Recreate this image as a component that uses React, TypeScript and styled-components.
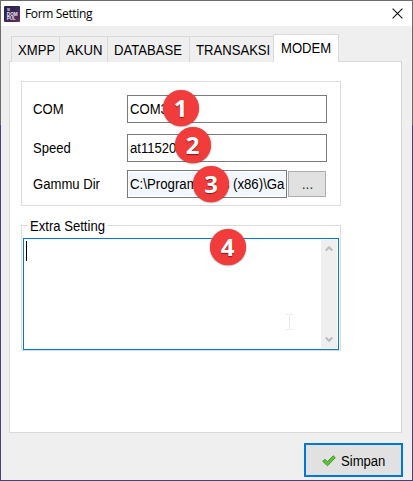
import React from "react";
import styled, { createGlobalStyle } from "styled-components";

const Global = createGlobalStyle`
  * { box-sizing: border-box; }
  body { margin: 0; overflow: hidden; font-family: "Liberation Sans", Arial, sans-serif; color: #000; }
`;

const Frame = styled.div`
  width: 413px;
  height: 481px;
  padding: 1px;
  background: linear-gradient(#6d6b6e 0 125px, #45427a 125px);
`;
const Window = styled.main`
  height: 479px;
  display: flex;
  flex-direction: column;
  background: #efefef;
`;
const TitleBar = styled.header`
  height: 25px;
  flex: none;
  display: flex;
  align-items: center;
  padding: 0 9px 0 3px;
  background: #fff;
`;
const Title = styled.h1`
  flex: 1;
  margin: 0 0 0 5px;
  font: 400 12px/24px "Open Sans", "Noto Sans", sans-serif;
  letter-spacing: -0.35px;
`;
const CloseButton = styled.button`
  width: 11px;
  height: 11px;
  padding: 0;
  border: 0;
  background: none;
  display: flex;
`;

/* Condensed label face: regular glyphs narrowed from the left edge. */
const Label = styled.span<{ $squeeze?: number }>`
  display: block;
  font-size: 15.5px;
  line-height: 18px;
  white-space: nowrap;
  transform: scaleX(${(p) => p.$squeeze ?? 0.845});
  transform-origin: left;
`;

const TabList = styled.nav`
  height: 28px;
  margin: 8px 0 -1px 10px;
  flex: none;
  display: flex;
  align-items: flex-end;
`;
const Tab = styled.button<{ $width: number; $active?: boolean }>`
  flex: none;
  width: ${(p) => p.$width}px;
  height: ${(p) => (p.$active ? 28 : 26)}px;
  padding: ${(p) => (p.$active ? "4px 0 0 7px" : "4px 0 0 5.5px")};
  border: solid #d9d9d9;
  border-width: ${(p) => (p.$active ? "1px 1px 0" : "1px 0 0 1px")};
  background: ${(p) => (p.$active ? "#fff" : "#efefef")};
  font-family: inherit;
  color: inherit;
  text-align: left;
  display: flex;
  align-items: flex-start;
  z-index: ${(p) => (p.$active ? 1 : 0)};
`;
const Panel = styled.section`
  width: 393px;
  height: 372px;
  margin-left: 8px;
  flex: none;
  padding: 19px 0 0 11px;
  border: 1px solid #d9d9d9;
  background: #fff;
`;
const Group = styled.div`
  width: 320px;
  height: 125px;
  padding: 13px 13px 0 11px;
  border: 1px solid #dcdcdc;
  display: flex;
  flex-direction: column;
`;
const Row = styled.label<{ $gap?: number }>`
  height: 28px;
  margin-bottom: ${(p) => p.$gap ?? 0}px;
  display: grid;
  grid-template-columns: 94px 1fr;
  align-items: center;
`;
const Controls = styled.div`
  display: flex;
  align-items: center;
  gap: 1px;
`;
const Field = styled.div<{ $width: number; $tinted?: boolean }>`
  flex: none;
  width: ${(p) => p.$width}px;
  height: 28px;
  padding: 4px 0 0 2px;
  border: 1px solid #7a7a7a;
  background: ${(p) => (p.$tinted ? "#f2f6fd" : "#fff")};
  box-shadow: inset 0 0 0 1px #fff;
  overflow: hidden;
`;
const BrowseButton = styled.button`
  width: 38px;
  height: 26px;
  padding: 0 0 0 1px;
  border: 1px solid #adadad;
  background: #e1e1e1;
  color: #333;
  font: 14px "Liberation Sans", sans-serif;
`;
const Fieldset = styled.fieldset`
  width: 320px;
  height: 135px;
  min-width: 0;
  margin: 10px 0 0;
  padding: 3px 1px 0;
  border: 1px solid #dcdcdc;
`;
const Legend = styled.legend`
  width: 79px;
  height: 19px;
  margin-left: 5px;
  padding: 1px 0 0 2px;
`;
const TextArea = styled.div`
  width: 316px;
  height: 112px;
  padding: 1px 1px 1px 2px;
  border: 1px solid #0078d7;
  display: flex;
  justify-content: space-between;
`;
const Caret = styled.div`
  width: 1px;
  height: 20px;
  margin-top: 1px;
  background: #000;
`;
const Scrollbar = styled.div`
  width: 16px;
  height: 108px;
  padding: 5px 4px;
  background: #efefef;
  display: flex;
  flex-direction: column;
  justify-content: space-between;
`;
const Footer = styled.footer`
  display: flex;
  justify-content: flex-end;
  padding: 10px 9px 0 0;
`;
const SaveButton = styled.button`
  width: 99px;
  height: 34px;
  padding: 1px 0 0 16px;
  border: 2px solid #0078d7;
  background: #e1e1e1;
  font-family: inherit;
  color: inherit;
  display: flex;
  align-items: center;
  gap: 5px;
`;
const Badge = styled.div<{ $x: number; $y: number }>`
  position: absolute;
  left: ${(p) => p.$x}px;
  top: ${(p) => p.$y}px;
  width: 36px;
  height: 36px;
  border-radius: 50%;
  background: #f23c3c;
  box-shadow: 0 0.5px 1.5px rgba(90, 20, 20, 0.7);
  color: #fff;
  font: 700 24px/35px "Open Sans", sans-serif;
  text-align: center;
  text-shadow: 0 1px 1px rgba(60, 0, 0, 0.6);
`;
const Pointer = styled.svg`
  position: absolute;
  left: 286px;
  top: 314px;
`;

const tabs = [
  { name: "XMPP", width: 48 },
  { name: "AKUN", width: 48 },
  { name: "DATABASE", width: 82 },
  { name: "TRANSAKSI", width: 84 },
  { name: "MODEM", width: 66, active: true },
];
const badges = [
  { x: 162.5, y: 90 },
  { x: 174.5, y: 127 },
  { x: 193, y: 165.5 },
  { x: 209.5, y: 228.5 },
];

const AppIcon = () => (
  <svg width="16" height="16" viewBox="0 0 16 16">
    <defs>
      <linearGradient id="logo" x1="0" y1="0" x2="1" y2="1">
        <stop offset="0" stopColor="#1f2150" />
        <stop offset=".5" stopColor="#392758" />
        <stop offset="1" stopColor="#68315f" />
      </linearGradient>
    </defs>
    <rect width="16" height="16" rx="1" fill="url(#logo)" />
    <g fill="#f0e8f4" fontFamily="Liberation Sans, sans-serif" fontWeight="700">
      <text x="3" y="5.2" fontSize="3">SI</text>
      <text x="2.8" y="9.7" fontSize="4.6" textLength="10.8" lengthAdjust="spacingAndGlyphs">DOM</text>
      <text x="2.8" y="14" fontSize="4.6" textLength="9" lengthAdjust="spacingAndGlyphs">PUL</text>
    </g>
  </svg>
);
const Chevron = ({ down = false }: { down?: boolean }) => (
  <svg width="8" height="7" viewBox="0 0 8 7">
    <path d={down ? "M.7 1.5 4 4.8 7.3 1.5" : "M.7 5.5 4 2.2 7.3 5.5"} fill="none" stroke="#bdbdbd" strokeWidth="2.2" />
  </svg>
);

export default function App() {
  return (
    <Frame>
      <Global />
      <Window>
        <TitleBar>
          <AppIcon />
          <Title>Form Setting</Title>
          <CloseButton aria-label="Close">
            <svg width="11" height="11" viewBox="0 0 11 11">
              <path d="M.6.6 10.4 10.4M10.4.6.6 10.4" stroke="#111" strokeWidth="1.1" />
            </svg>
          </CloseButton>
        </TitleBar>
        <TabList>
          {tabs.map((t) => (
            <Tab key={t.name} $width={t.width} $active={t.active}>
              <Label>{t.name}</Label>
            </Tab>
          ))}
        </TabList>
        <Panel>
          <Group>
            <Row $gap={11}>
              <Label>COM</Label>
              <Field $width={200}><Label>COM3</Label></Field>
            </Row>
            <Row $gap={8}>
              <Label>Speed</Label>
              <Field $width={200}><Label>at115200</Label></Field>
            </Row>
            <Row>
              <Label>Gammu Dir</Label>
              <Controls>
                <Field $width={160} $tinted><Label $squeeze={0.854}>C:\Program Files (x86)\Ga</Label></Field>
                <BrowseButton>...</BrowseButton>
              </Controls>
            </Row>
          </Group>
          <Fieldset>
            <Legend><Label>Extra Setting</Label></Legend>
            <TextArea>
              <Caret />
              <Scrollbar>
                <Chevron />
                <Chevron down />
              </Scrollbar>
            </TextArea>
          </Fieldset>
        </Panel>
        <Footer>
          <SaveButton>
            <svg width="14" height="12" viewBox="0 0 14 12">
              <path d="M.7 6.3 3 4.2l2.4 2.4L11.2.8l2.1 1.9-7.8 8.1z" fill="#62bf38" stroke="#3b9128" strokeWidth=".9" />
            </svg>
            <Label>Simpan</Label>
          </SaveButton>
        </Footer>
      </Window>
      {badges.map((b, i) => (
        <Badge key={i} $x={b.x} $y={b.y}>{i + 1}</Badge>
      ))}
      <Pointer width="8" height="17" viewBox="0 0 8 17">
        <path d="M0 .5H3M4 .5H7M3.5 1V15M0 15.5H3M4 15.5H7" stroke="#e9e9e9" fill="none" />
      </Pointer>
    </Frame>
  );
}
